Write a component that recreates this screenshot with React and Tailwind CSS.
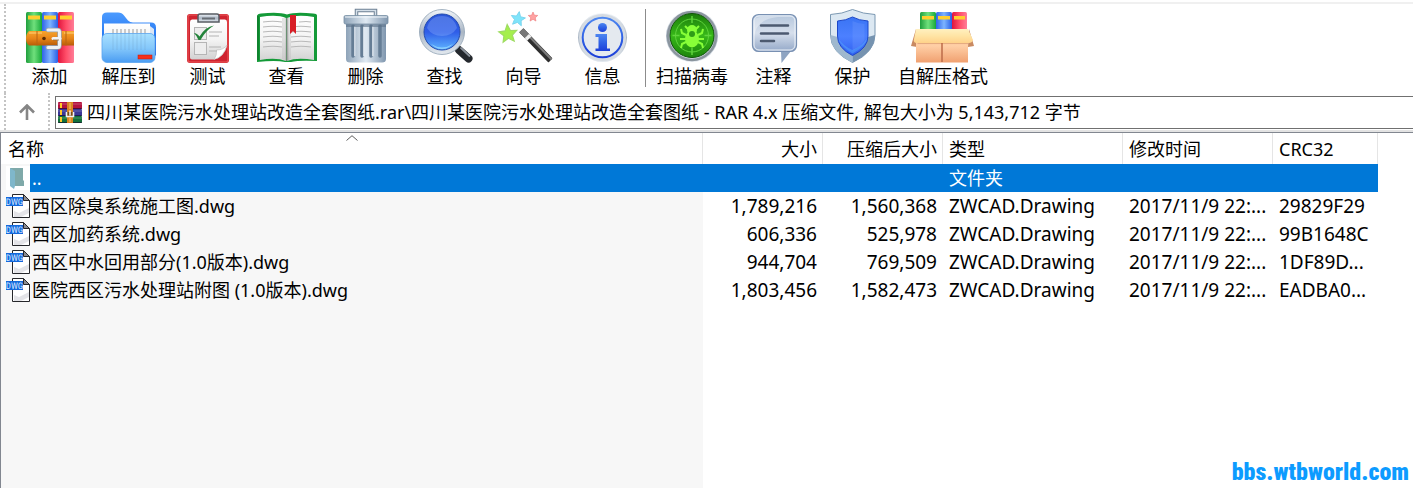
import clsx from 'clsx'

const archivePath =
  '四川某医院污水处理站改造全套图纸.rar\\四川某医院污水处理站改造全套图纸 - RAR 4.x 压缩文件, 解包大小为 5,143,712 字节'

const files = [
  { name: '西区除臭系统施工图.dwg', size: '1,789,216', packed: '1,560,368', crc: '29829F29' },
  { name: '西区加药系统.dwg', size: '606,336', packed: '525,978', crc: '99B1648C' },
  { name: '西区中水回用部分(1.0版本).dwg', size: '944,704', packed: '769,509', crc: '1DF89D...' },
  { name: '医院西区污水处理站附图 (1.0版本).dwg', size: '1,803,456', packed: '1,582,473', crc: 'EADBA0...' },
]

/** Gradients shared by all toolbar icons */
function Gradients() {
  const list = [
    ['green', '#1f9e3c', '#6fe07c', '#17a83a', true],
    ['blue', '#2f63e8', '#7db4ff', '#2a5fe6', true],
    ['red', '#e0143c', '#ff4d68', '#ff7d98', true],
    ['belt', '#f7a52c', '#e8861a', '#b85c08', false],
    ['steel', '#f2f6fa', '#aab6c4', '#e3e9ef', false],
    ['can', '#8ea3b8', '#dfe9f2', '#7f96ae', true],
    ['folder', '#4c9bff', '#2b7cf2', '#1c5fe0', false],
    ['front', '#a8e0ff', '#85c8fb', '#4a9cf2', false],
    ['paper', '#ffffff', '#f4f4f4', '#d2d2d2', false],
    ['lens', '#2a55d8', '#2f5de8', '#5fb4ff', false],
    ['infoblue', '#4d86f0', '#2f62e6', '#1c3fd8', false],
    ['virus', '#1c7d0c', '#37b818', '#1d850c', false],
    ['bubble', '#b4c6dc', '#d6dfec', '#93a8c8', false],
    ['shield', '#3a74f4', '#4c80ff', '#2f5ff0', false],
    ['box', '#f2a878', '#ffcfa6', '#f0a070', false],
    ['flap', '#fff0c0', '#ffe4a4', '#ffd28a', false],
  ]
  return (
    <svg className="absolute size-0" aria-hidden="true">
      <defs>
        {list.map(([id, a, b, c, horizontal]) => (
          <linearGradient key={id} id={id} x1="0" y1="0" x2={horizontal ? 1 : 0} y2={horizontal ? 0 : 1}>
            <stop offset="0" stopColor={a} />
            <stop offset="0.5" stopColor={b} />
            <stop offset="1" stopColor={c} />
          </linearGradient>
        ))}
      </defs>
    </svg>
  )
}

function Icon({ children }) {
  return (
    <svg viewBox="0 0 56 56" className="size-14 overflow-visible" aria-hidden="true">
      {children}
    </svg>
  )
}

function AddIcon() {
  return (
    <Icon>
      <rect x="4" y="3" width="16" height="51" rx="1.5" fill="url(#green)" />
      <rect x="20" y="3" width="16" height="51" rx="1.5" fill="url(#blue)" />
      <rect x="36" y="3" width="16" height="51" rx="1.5" fill="url(#red)" />
      <path d="M6 6.500h12v4H6zM22 6.500h12v4H22zM38 6.500h12v4H38z" fill="#ffcf2e" />
      <path d="M7 22h45v14.500H7q-3-2-3-7t3-7.500z" fill="url(#belt)" />
      <path d="M7 24h13M42 24h10" stroke="#ffd27a" strokeWidth="1" />
      <path d="M15 22v14.500M44 22v14.500" stroke="#b86412" strokeWidth="1" />
      <circle cx="22" cy="29.500" r="1.800" fill="#5a2c04" />
      <path d="M26 21h9.500q2 0 2 2v13.500q0 2-2 2H26" fill="none" stroke="#98a2ac" strokeWidth="4.500" strokeLinecap="round" />
      <path d="M26 21h9.500q2 0 2 2v13.500q0 2-2 2H26" fill="none" stroke="#eef2f5" strokeWidth="3" strokeLinecap="round" />
      <path d="M31 29.500h7" stroke="#f2f4f6" strokeWidth="3" strokeLinecap="round" />
      <path d="M31 31h6" stroke="#8d6a40" strokeWidth="0.800" />
    </Icon>
  )
}

function ExtractIcon() {
  return (
    <Icon>
      <path d="M1 8q0-4.500 5-4.500h11q4 0 6 3l4 5q2 2 5 2h18q5 0 5 5v28H1z" fill="url(#folder)" />
      <rect x="3" y="14.500" width="46" height="28" fill="url(#paper)" />
      <path d="M49 17l4 3v20h-4z" fill="#dce6f4" />
      <rect x="1" y="24.500" width="53" height="29" rx="5" fill="url(#front)" stroke="#5aa4f0" strokeWidth="0.800" />
      <path d="M12 24v17M16 24v17M20 24v17M24 24v17M28 24v17M32 24v17M36 24v17M40 24v17M44 24v17" stroke="#6d9cc4" strokeWidth="1" opacity="0.300" />
      <path d="M12 20v4M16 20v4M20 20v4M24 20v4M28 20v4M32 20v4M36 20v4M40 20v4M44 20v4" stroke="#9a9a9a" strokeWidth="1" />
      <rect x="37" y="46" width="14" height="4" fill="#f5301c" stroke="#c81808" strokeWidth="0.500" />
    </Icon>
  )
}

function TestIcon() {
  return (
    <Icon>
      <rect x="7" y="5" width="42" height="49" rx="3" fill="#cf2430" />
      <rect x="8" y="6" width="40" height="47" rx="2" fill="none" stroke="#ee5a5a" strokeWidth="1" />
      <path d="M10 13q0-2.500 2-2.500h33q2 0 2 2.500v24q-3 11-13 13.500H12q-2 0-2-2z" fill="url(#paper)" />
      <path d="M47 36q-3 12-13 14.500 3-4 2.500-9.500 7 0 10.500-5z" fill="#ffffff" stroke="#bbbbbb" strokeWidth="0.600" />
      <path d="M18 13V7q0-2 2-2h17q2 0 2 2v6z" fill="url(#steel)" stroke="#555b62" strokeWidth="1.500" />
      <path d="M22 9.500h13" stroke="#686e75" strokeWidth="2" />
      <rect x="14.500" y="18.500" width="12" height="12" fill="#ededed" stroke="#b5b5b5" />
      <rect x="14.500" y="33.500" width="12" height="12" fill="#ededed" stroke="#b5b5b5" />
      <path d="M29 23h13M29 27h10M29 38h12M29 42h8" stroke="#b4b4b4" strokeWidth="1" />
      <path d="M14 24q3 0 5.500 3.500Q25 18 34 16.500 26 21 20.500 31h-2Q17 27 14 24z" fill="#23833a" />
    </Icon>
  )
}

function ViewIcon() {
  return (
    <Icon>
      <path d="M-2 6.500q1-2 4-2 18-2 26 1 8-3 26-1 4 0 4 2V52q-18-1-26 1h-6q-9-2-28 0z" fill="#149a38" />
      <path d="M-1 7v44" stroke="#0b6c24" />
      <path d="M1 8q17-3 26 1v43q-10-4-26-1z" fill="url(#paper)" />
      <path d="M55 8Q38 5 28 9v43q10-4 27-1z" fill="url(#paper)" />
      <path d="M26.500 9h3v43h-3z" fill="#8d8d8d" opacity="0.700" />
      <path d="M23 9h3v42l-3-1zM30 9h2v41l-2 1z" fill="#bdbdbd" opacity="0.400" />
      <path
        d="M4 13q10-1.500 19 0M4 18q10-1.500 19 0M4 23q10-1.500 19 0M4 28q10-1.500 19 0M4 33q10-1.500 19 0M4 38q10-1.500 19 0M40 13q8-1 12 0M32 18q10-1.500 20 0M32 23q10-1.500 20 0M32 28q10-1.500 20 0M32 33q10-1.500 20 0M32 38q10-1.500 20 0"
        fill="none"
        stroke="#b9b9b9"
        strokeWidth="1.200"
      />
      <path d="M31 6h6v19l-3-3-3 3z" fill="#d81e26" />
    </Icon>
  )
}

function DeleteIcon() {
  return (
    <Icon>
      <path d="M18.500 7V1.500h19V7" fill="none" stroke="#6e8193" strokeWidth="3.500" />
      <path d="M18.500 7V1.500h19V7" fill="none" stroke="#d4dfe9" strokeWidth="1.500" />
      <path d="M8 13h40v37q0 3.500-4 3.500H12q-4 0-4-3.500z" fill="url(#can)" />
      <path d="M15 17v30M24 17v30M33 17v30M42 17v30" stroke="#657d95" strokeWidth="3.500" strokeLinecap="round" />
      <path d="M16.800 17v30M25.800 17v30M34.800 17v30" stroke="#f0f6fb" strokeWidth="1" />
      <path d="M8 15h40v3H8z" fill="#5c7288" opacity="0.600" />
      <rect x="6" y="6.500" width="44" height="8.500" rx="1.500" fill="url(#can)" stroke="#7990a5" strokeWidth="0.800" />
      <path d="M7 8h42" stroke="#f4f9fd" strokeWidth="1" />
    </Icon>
  )
}

function FindIcon() {
  return (
    <Icon>
      <path d="M38 37l6 5" stroke="#8f9aa4" strokeWidth="5" />
      <path d="M42 41l9.500 8.500" stroke="#24282d" strokeWidth="8" strokeLinecap="round" />
      <path d="M44 39l8.500 8" stroke="#8b939c" strokeWidth="1.800" strokeLinecap="round" />
      <circle cx="25" cy="23" r="22.500" fill="url(#steel)" stroke="#8fa2b4" strokeWidth="0.800" />
      <circle cx="25" cy="23" r="18" fill="url(#lens)" stroke="#244cae" strokeWidth="1" />
      <path d="M10 19Q13 7 25 7t15 12q-5 8-15 8T10 19z" fill="#9fc0ff" opacity="0.300" />
      <path d="M14 35q11 7 22 0-5 5-11 5t-11-5z" fill="#9fe0ff" opacity="0.700" />
    </Icon>
  )
}

function Star({ x, y, r, angle, fill, stroke }) {
  return (
    <path
      d="M0-10 2.800-3.500 9.500-3.100 4.500 1.500 5.900 8.100 0 4.600-5.900 8.100-4.500 1.500-9.500-3.100-2.800-3.500z"
      transform={`translate(${x} ${y}) rotate(${angle}) scale(${r / 10})`}
      fill={fill}
      stroke={stroke}
      strokeWidth="1.200"
    />
  )
}

function WizardIcon() {
  return (
    <Icon>
      <Star x={12} y={25} r={9.5} angle={-5} fill="#a5ef4c" stroke="#9edb62" />
      <Star x={22} y={10} r={7.5} angle={10} fill="#7fe4fa" stroke="#7ad4ee" />
      <Star x={37} y={8} r={5} angle={0} fill="#ffa2a2" stroke="#ec7575" />
      <g transform="rotate(46 26 22)">
        <rect x="25" y="19" width="42" height="6" rx="1" fill="#2e2e2e" />
        <rect x="25" y="19.500" width="42" height="2" fill="#7c7c7c" />
        <rect x="25" y="19" width="8" height="6" fill="#777777" />
        <rect x="33" y="19" width="3.500" height="6" fill="#eeeeee" />
      </g>
    </Icon>
  )
}

function InfoIcon() {
  return (
    <Icon>
      <circle cx="27.500" cy="28.500" r="24.500" fill="url(#steel)" />
      <circle cx="27.500" cy="28.500" r="23.500" fill="#d5dbe2" />
      <circle cx="27.500" cy="28.500" r="19.800" fill="#e4e9ef" stroke="url(#infoblue)" strokeWidth="2" />
      <circle cx="27.500" cy="18.500" r="4.500" fill="url(#infoblue)" />
      <path d="M20.500 25H32v14.500h3V42H20.500v-2.500h3V28h-3z" fill="url(#infoblue)" />
    </Icon>
  )
}

function VirusIcon() {
  return (
    <Icon>
      <circle cx="28" cy="27" r="26" fill="url(#steel)" />
      <circle cx="28" cy="27" r="24" fill="none" stroke="#8b959e" strokeWidth="2.500" />
      <circle cx="28" cy="26.500" r="22" fill="url(#virus)" stroke="#0e5208" strokeWidth="1" />
      <circle cx="28" cy="26.500" r="16.500" fill="none" stroke="#5fd43c" strokeWidth="1" />
      <path d="M28 7v7M28 39v7M8.500 26.500h7M40.500 26.500h7" stroke="#5fd43c" strokeWidth="1.500" />
      <g fill="none" stroke="#88ff38" strokeWidth="2">
        <path d="M24 20l-3-3M32 20l3-3M22 26l-4-2-1-4M34 26l4-2 1-4M22 30h-6M34 30h6M22 33l-4 2-1 4M34 33l4 2 1 4" />
      </g>
      <ellipse cx="28" cy="30" rx="7" ry="8.500" fill="#88ff38" />
      <circle cx="28" cy="21" r="5" fill="#88ff38" />
      <circle cx="28" cy="25" r="3" fill="#2f9d18" />
    </Icon>
  )
}

function CommentIcon() {
  return (
    <Icon>
      <path d="M35 42l.5 12L45 42z" fill="#8ea4c2" />
      <rect x="6.500" y="5.500" width="44" height="37" rx="6" fill="url(#bubble)" stroke="#7890b2" strokeWidth="1.200" />
      <rect x="8" y="7" width="41" height="34" rx="5" fill="none" stroke="#edf2f8" strokeWidth="1" />
      <path d="M8 28Q10 10 32 8H14q-6 0-6 6z" fill="#ffffff" opacity="0.350" />
      <path d="M15 16.500h27M15 24.500h27M15 32h13" stroke="#4c5a70" strokeWidth="2.500" strokeLinecap="round" />
    </Icon>
  )
}

function ProtectIcon() {
  return (
    <Icon>
      <path d="M27.500.500Q38 5 50 5.500V26q0 17-22.500 27.500Q5.500 43 5.500 26V5.500Q17 5 27.500.500z" fill="#dce8f2" stroke="#7b98b2" strokeWidth="1" />
      <path d="M27.500 46v7.500Q5.500 43 5.500 26l7 2q1 11 15 18z" fill="#9fb8ce" />
      <path d="M27.500 46v7.500Q50 43 50 26l-7 2q-1 11-15.500 18z" fill="#7693b0" />
      <path d="M27.500 8Q34 11.500 43 12v15q0 12-15.500 19.500Q12.500 39 12.500 27V12Q21 11.500 27.500 8z" fill="url(#shield)" stroke="#1d48c8" strokeWidth="1" />
      <path d="M27.500 42q9-5 12-11v-16q-6 0-12-3z" fill="#7ba4ff" opacity="0.250" />
      <path d="M13 29q3 9 14.500 15.500Q40 38 42.500 29 37 37 27.500 41 18 37 13 29z" fill="#62c4ff" opacity="0.350" />
    </Icon>
  )
}

function SfxIcon() {
  return (
    <Icon>
      <rect x="5" y="3" width="16" height="20" rx="1.500" fill="url(#green)" />
      <rect x="21" y="3" width="16" height="20" rx="1.500" fill="url(#blue)" />
      <rect x="37" y="3" width="15" height="20" rx="1.500" fill="url(#red)" />
      <path d="M7 7h12v3.500H7zM23 7h12v3.500H23zM39 7h11v3.500H39z" fill="#ffcf2e" />
      <path d="M1 20l-5 17 6 1zM54 20l5 17-6 1z" fill="#c98a62" />
      <rect x="1" y="20" width="52" height="33.500" fill="url(#box)" />
      <path d="M27 34v19" stroke="#bd6b48" strokeWidth="1.500" />
      <path d="M1 33h52v2H3z" fill="#b0623c" opacity="0.300" />
      <path d="M1 20h52l5 11q-1 3-4 3H1q-3-1-2-4z" fill="url(#flap)" />
    </Icon>
  )
}

function ArchiveIcon() {
  return (
    <svg viewBox="0 0 24 21" className="h-[21px] w-6 shrink-0" aria-hidden="true">
      <rect width="24" height="7" rx="1" fill="#b3123e" />
      <rect y="7" width="24" height="7" rx="1" fill="#3a3796" />
      <rect y="14" width="24" height="7" rx="1" fill="#12703a" />
      <path d="M0 2h24M0 9h24M0 16h24" stroke="#ffffff" strokeWidth="1" opacity="0.250" />
      <path d="M0 6.500h24M0 13.500h24M0 20.500h24" stroke="#10082a" strokeWidth="1" opacity="0.600" />
      <path d="M3 1v5M3 8v5M3 15v5" stroke="#ffc928" strokeWidth="2" />
      <rect x="9" width="6" height="21" fill="#d98420" />
      <path d="M12 1v6M12 16v4" stroke="#ffc368" strokeWidth="1" />
      <path d="M8.500 10v4.500h7V10" fill="#7a4a12" stroke="#f2f2f2" strokeWidth="1.600" />
      <path d="M12 8.500v5" stroke="#ffffff" strokeWidth="1.400" />
    </svg>
  )
}

function FolderIcon() {
  return (
    <svg viewBox="0 0 24 24" className="size-6 shrink-0 bg-white" aria-hidden="true">
      <path d="M4 2h13v12l1 1v5H7z" fill="#7fa9a9" />
      <path d="M4 2l5 3v15l-1 3-4-3z" fill="#7fb7cb" />
    </svg>
  )
}

function DwgIcon() {
  return (
    <svg viewBox="0 0 24 24" className="size-6 shrink-0" aria-hidden="true">
      <path d="M6.500.500h11l6 6v17h-17z" fill="#ffffff" stroke="#26272b" />
      <path d="M8 17l5 2 10-5v5l-8 4H8z" fill="#e4e4e8" />
      <path d="M17.500.500l6 6h-6z" fill="#8b8b8f" stroke="#26272b" />
      <rect y="3" width="17" height="9" fill="#1468dc" />
      <text x="8.500" y="11" textAnchor="middle" fontSize="9" textRendering="geometricPrecision" fill="#d4e6ff" fontFamily="'Roboto Condensed', Roboto, sans-serif">
        DWG
      </text>
    </svg>
  )
}

function ToolButton({ icon: ToolIcon, label }) {
  return (
    <button type="button" className="flex min-w-[79px] flex-col items-center px-1.5 whitespace-nowrap">
      <ToolIcon />
      <span className="leading-[22px]">{label}</span>
    </button>
  )
}

function Grip() {
  return <div className="w-0 self-stretch border-l-2 border-dotted border-[#c4c4c4]" />
}

function HeaderCell({ children, right }) {
  return (
    <th scope="col" className={clsx('h-[31px] border-r border-[#e5e5e5] p-0 px-1.5 font-normal', right ? 'pr-[5px] text-right' : 'text-left')}>
      {children}
    </th>
  )
}

function FileTable() {
  return (
    <table className="w-[1377px] table-fixed border-separate border-spacing-0 whitespace-nowrap">
      <colgroup>
        <col className="w-[702px]" />
        <col className="w-[120px]" />
        <col className="w-[120px]" />
        <col className="w-[180px]" />
        <col className="w-[150px]" />
        <col className="w-[105px]" />
      </colgroup>
      <thead>
        <tr>
          <th scope="col" aria-sort="ascending" className="relative h-[31px] border-r border-[#e5e5e5] p-0 pl-[7px] text-left font-normal">
            名称
            <svg viewBox="0 0 12 6" className="absolute top-0.5 left-1/2 h-1.5 w-3 -translate-x-1/2" fill="none" stroke="#5c5c5c" aria-hidden="true">
              <path d="M.500 5.500 6 .700l5.500 4.800" />
            </svg>
          </th>
          <HeaderCell right>大小</HeaderCell>
          <HeaderCell right>压缩后大小</HeaderCell>
          <HeaderCell>类型</HeaderCell>
          <HeaderCell>修改时间</HeaderCell>
          <HeaderCell>CRC32</HeaderCell>
        </tr>
      </thead>
      <tbody>
        <tr className="text-white">
          <td className="h-7 bg-[#f7f7f7] p-0">
            <div className="flex h-7 items-center pl-[5px]">
              <FolderIcon />
              <span className="flex-1 bg-[#0078d7] pl-0.5 leading-7">..</span>
            </div>
          </td>
          <td className="bg-[#0078d7]" />
          <td className="bg-[#0078d7]" />
          <td className="bg-[#0078d7] p-0 px-1.5">文件夹</td>
          <td className="bg-[#0078d7]" />
          <td className="bg-[#0078d7]" />
        </tr>
        {files.map((file) => (
          <tr key={file.name} className="text-[19px]">
            <td className="h-7 bg-[#f7f7f7] p-0 text-[18px]">
              <div className="flex h-7 items-center pl-[5px]">
                <DwgIcon />
                <span className="pl-0.5 leading-7">{file.name}</span>
              </div>
            </td>
            <td className="p-0 pr-1.5 text-right">{file.size}</td>
            <td className="p-0 pr-1.5 text-right">{file.packed}</td>
            <td className="p-0 pl-1.5">ZWCAD.Drawing</td>
            <td className="p-0 pl-1.5">2017/11/9 22:...</td>
            <td className="p-0 pl-1.5">{file.crc}</td>
          </tr>
        ))}
      </tbody>
    </table>
  )
}

export default function App() {
  return (
    <div className="relative flex min-h-screen flex-col overflow-hidden bg-white font-['Noto_Sans','Noto_Sans_CJK_SC',sans-serif] text-[18px] leading-6 text-black">
      <Gradients />
      <div className="mt-0.5 h-0.5 bg-[#f0f0f0]" />

      <div className="flex pl-1">
        <Grip />
        <div className="flex pt-[5px] pb-1.5 pl-1">
          <ToolButton icon={AddIcon} label="添加" />
          <ToolButton icon={ExtractIcon} label="解压到" />
          <ToolButton icon={TestIcon} label="测试" />
          <ToolButton icon={ViewIcon} label="查看" />
          <ToolButton icon={DeleteIcon} label="删除" />
          <ToolButton icon={FindIcon} label="查找" />
          <ToolButton icon={WizardIcon} label="向导" />
          <ToolButton icon={InfoIcon} label="信息" />
          <div className="mr-1 ml-[3px] w-px bg-[#8c8c8c]" />
          <ToolButton icon={VirusIcon} label="扫描病毒" />
          <ToolButton icon={CommentIcon} label="注释" />
          <ToolButton icon={ProtectIcon} label="保护" />
          <ToolButton icon={SfxIcon} label="自解压格式" />
        </div>
      </div>

      <div className="flex h-[39px] border-b-2 border-[#e3e3e3] pl-1">
        <Grip />
        <button type="button" aria-label="向上" className="flex w-[42px] items-center justify-center">
          <svg viewBox="0 0 16 16" className="size-4" fill="none" stroke="#858585" strokeWidth="2.600" aria-hidden="true">
            <path d="M8 16V1.500M1 8.500l7-7 7 7" />
          </svg>
        </button>
        <Grip />
        <label className="mt-[3px] ml-[5px] flex h-[33px] flex-1 items-center gap-[5px] border border-r-0 border-[#707070] pl-0.5">
          <ArchiveIcon />
          <input aria-label="路径" className="h-full min-w-0 flex-1 pb-[3px] outline-none" defaultValue={archivePath} />
        </label>
      </div>

      <div className="flex flex-1 flex-col border-t border-l border-[#828790]">
        <FileTable />
        <div className="w-[702px] flex-1 bg-[#f7f7f7]" />
      </div>

      <a
        href="#bbs"
        className="absolute right-1 bottom-0 font-['Roboto_Condensed','Open_Sans_Condensed',Roboto,sans-serif] text-[24px] leading-8 font-black text-[#0c9bff]"
      >
        bbs.wtbworld.com
      </a>
    </div>
  )
}
